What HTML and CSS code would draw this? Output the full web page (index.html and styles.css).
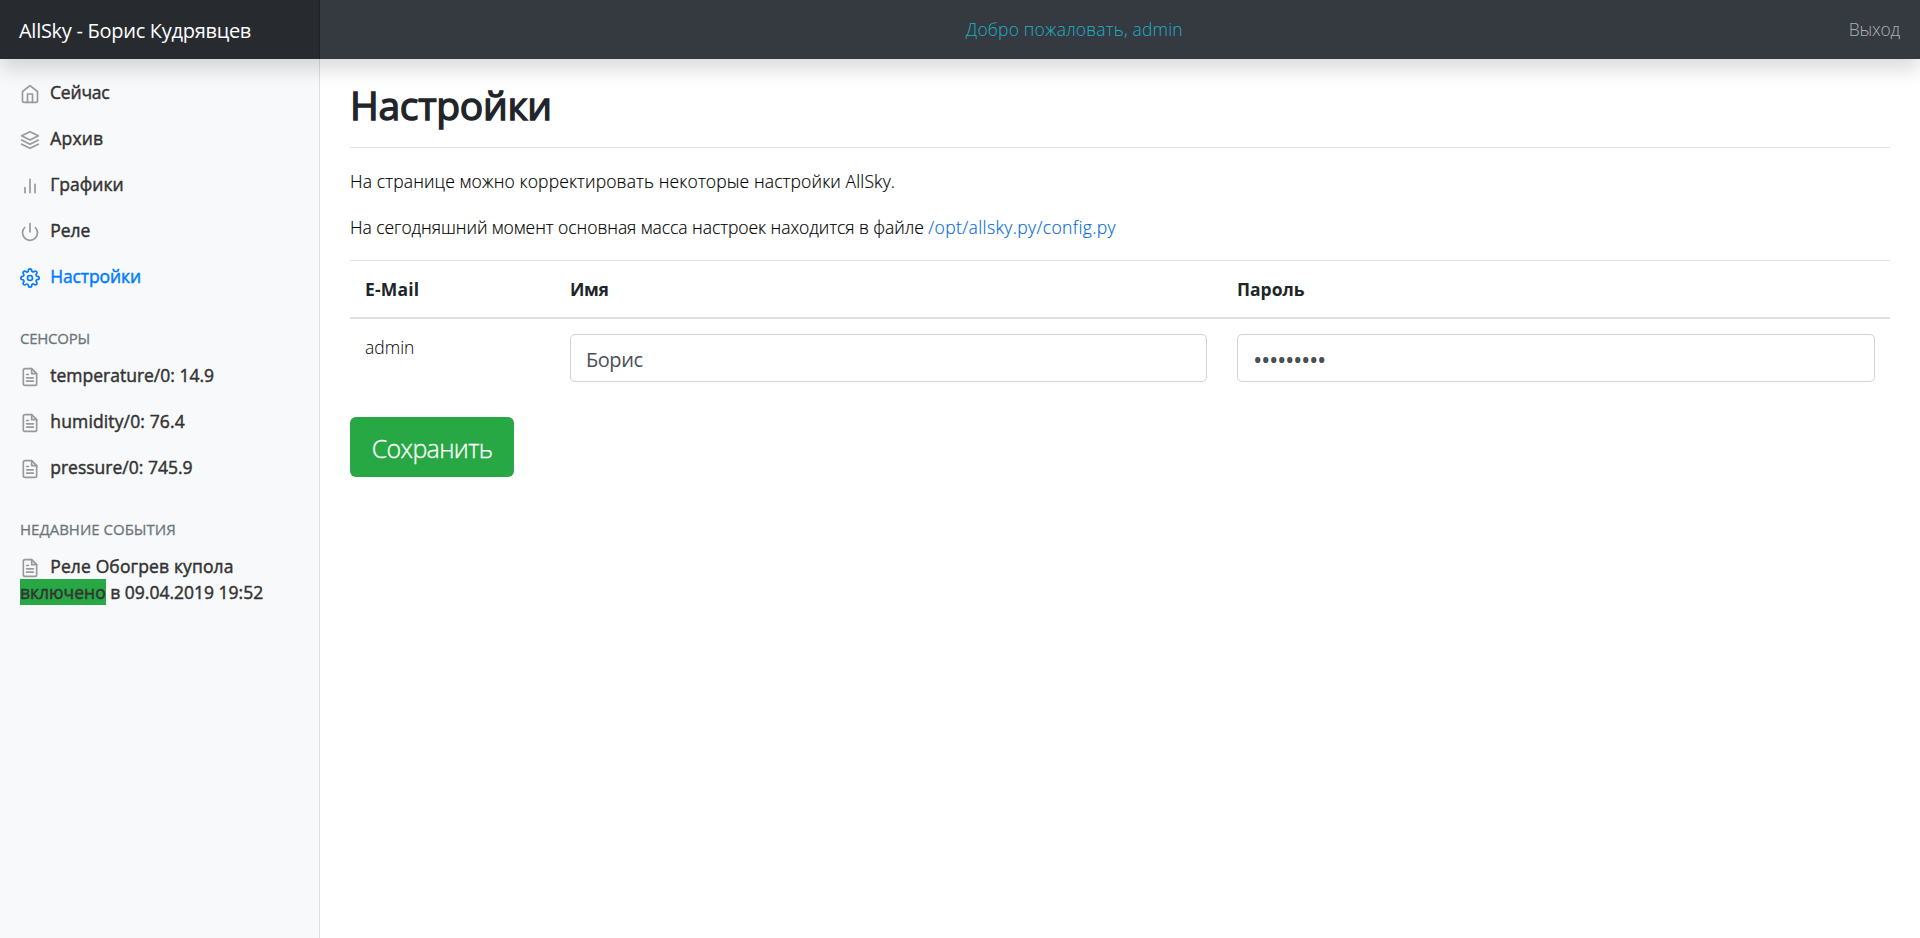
FILE: index.html
```
<!DOCTYPE html>
<html lang="ru">
<head>
<meta charset="utf-8">
<title>AllSky - Борис Кудрявцев</title>
<link rel="stylesheet" href="styles.css">
</head>
<body>
<svg class="sprite" aria-hidden="true">
  <symbol id="home" viewBox="0 0 24 24"><path d="M3 9l9-7 9 7v11a2 2 0 0 1-2 2H5a2 2 0 0 1-2-2z"/><polyline points="9 22 9 12 15 12 15 22"/></symbol>
  <symbol id="layers" viewBox="0 0 24 24"><polygon points="12 2 2 7 12 12 22 7 12 2"/><polyline points="2 17 12 22 22 17"/><polyline points="2 12 12 17 22 12"/></symbol>
  <symbol id="chart" viewBox="0 0 24 24"><line x1="18" y1="20" x2="18" y2="10"/><line x1="12" y1="20" x2="12" y2="4"/><line x1="6" y1="20" x2="6" y2="14"/></symbol>
  <symbol id="power" viewBox="0 0 24 24"><path d="M18.36 6.64a9 9 0 1 1-12.73 0"/><line x1="12" y1="2" x2="12" y2="12"/></symbol>
  <symbol id="settings" viewBox="0 0 24 24"><circle cx="12" cy="12" r="3"/><path d="M19.4 15a1.65 1.65 0 0 0 .33 1.82l.06.06a2 2 0 0 1 0 2.83 2 2 0 0 1-2.83 0l-.06-.06a1.65 1.65 0 0 0-1.82-.33 1.65 1.65 0 0 0-1 1.51V21a2 2 0 0 1-2 2 2 2 0 0 1-2-2v-.09A1.65 1.65 0 0 0 9 19.4a1.65 1.65 0 0 0-1.82.33l-.06.06a2 2 0 0 1-2.83 0 2 2 0 0 1 0-2.83l.06-.06a1.65 1.65 0 0 0 .33-1.82 1.65 1.65 0 0 0-1.51-1H3a2 2 0 0 1-2-2 2 2 0 0 1 2-2h.09A1.65 1.65 0 0 0 4.6 9a1.65 1.65 0 0 0-.33-1.82l-.06-.06a2 2 0 0 1 0-2.83 2 2 0 0 1 2.83 0l.06.06a1.65 1.65 0 0 0 1.82.33H9a1.65 1.65 0 0 0 1-1.51V3a2 2 0 0 1 2-2 2 2 0 0 1 2 2v.09a1.65 1.65 0 0 0 1 1.51 1.65 1.65 0 0 0 1.82-.33l.06-.06a2 2 0 0 1 2.83 0 2 2 0 0 1 0 2.83l-.06.06a1.65 1.65 0 0 0-.33 1.82V9a1.65 1.65 0 0 0 1.51 1H21a2 2 0 0 1 2 2 2 2 0 0 1-2 2h-.09a1.65 1.65 0 0 0-1.51 1z"/></symbol>
  <symbol id="file" viewBox="0 0 24 24"><path d="M14 2H6a2 2 0 0 0-2 2v16a2 2 0 0 0 2 2h12a2 2 0 0 0 2-2V8z"/><polyline points="14 2 14 8 20 8"/><line x1="16" y1="13" x2="8" y2="13"/><line x1="16" y1="17" x2="8" y2="17"/><polyline points="10 9 9 9 8 9"/></symbol>
</svg>
<header class="navbar">
  <a class="brand">AllSky - Борис Кудрявцев</a>
  <span class="welcome">Добро пожаловать, admin</span>
  <a class="logout">Выход</a>
</header>
<div class="layout">
  <nav class="sidebar">
    <ul class="nav">
      <li><a class="link tight"><svg class="icon"><use href="#home"/></svg> Сейчас</a></li>
      <li><a class="link loose"><svg class="icon"><use href="#layers"/></svg> Архив</a></li>
      <li><a class="link"><svg class="icon"><use href="#chart"/></svg> Графики</a></li>
      <li><a class="link"><svg class="icon"><use href="#power"/></svg> Реле</a></li>
      <li><a class="link active"><svg class="icon"><use href="#settings"/></svg> Настройки</a></li>
    </ul>
    <h6 class="section sensors">Сенсоры</h6>
    <ul class="nav">
      <li><a class="link"><svg class="icon"><use href="#file"/></svg> temperature/0: 14.9</a></li>
      <li><a class="link loose"><svg class="icon"><use href="#file"/></svg> humidity/0: 76.4</a></li>
      <li><a class="link"><svg class="icon"><use href="#file"/></svg> pressure/0: 745.9</a></li>
    </ul>
    <h6 class="section">Недавние события</h6>
    <ul class="nav">
      <li><a class="link"><svg class="icon"><use href="#file"/></svg> <span class="loose">Реле Обогрев купола</span> <span class="state-on">включено</span> в 09.04.2019 19:52</a></li>
    </ul>
  </nav>
  <main class="content">
    <h1 class="title">Настройки</h1>
    <p class="intro">На странице можно корректировать некоторые настройки AllSky.</p>
    <p class="where">На сегодняшний момент основная масса настроек находится в файле <a class="path">/opt/allsky.py/config.py</a></p>
    <form>
      <table class="users">
        <colgroup><col class="col-mail"><col class="col-name"><col class="col-pass"></colgroup>
        <thead><tr><th class="th-mail">E-Mail</th><th class="th-name">Имя</th><th class="th-pass">Пароль</th></tr></thead>
        <tbody><tr>
          <td class="mail">admin</td>
          <td><input class="field" type="text" value="Борис"></td>
          <td><input class="field secret" type="password" value="123456789"></td>
        </tr></tbody>
      </table>
      <button class="save" type="button">Сохранить</button>
    </form>
  </main>
</div>
</body>
</html>
```
FILE: styles.css
```
*, *::before, *::after { box-sizing: border-box; }

body {
  margin: 0;
  font: 400 17.5px/26px "Open Sans", "Noto Sans", sans-serif;
  color: #212529;
  background: #fff;
}

.sprite { display: none; }

.navbar {
  position: relative;
  z-index: 1;
  display: flex;
  align-items: center;
  justify-content: space-between;
  height: 59px;
  background: #343a40;
  box-shadow: 0 10px 20px rgba(0, 0, 0, .15);
}

.brand {
  width: 320px;
  height: 59px;
  padding: 1px 0 0 19px;
  line-height: 59px;
  font-size: 20px;
  letter-spacing: -.28px;
  color: #fff;
  background: rgba(0, 0, 0, .25);
  box-shadow: inset -1px 0 0 rgba(0, 0, 0, .25);
}

.welcome {
  margin-right: 20px;
  padding-bottom: 2px;
  font-weight: 300;
  letter-spacing: .17px;
  color: #20b0c6;
}

.logout {
  padding: 0 20px 2px 0;
  font-weight: 300;
  letter-spacing: -.16px;
  color: rgba(255, 255, 255, .6);
}

.layout { display: flex; min-height: 879px; }

.sidebar {
  flex: none;
  width: 320px;
  padding-top: 10px;
  background: #f8f9fa;
  box-shadow: inset -1px 0 0 rgba(0, 0, 0, .1);
}

.nav { margin: 0; padding: 0; list-style: none; }

.link {
  display: block;
  padding: 10px 20px;
  -webkit-text-stroke: .45px currentColor;
  color: #333;
}

.icon {
  width: 20px;
  height: 20px;
  margin-right: 5.7px;
  vertical-align: text-bottom;
  fill: none;
  stroke: #999;
  stroke-width: 2;
  stroke-linecap: round;
  stroke-linejoin: round;
}

.active { color: #007bff; letter-spacing: -.1px; }
.active .icon { stroke: currentColor; }
.tight { letter-spacing: -.2px; }
.loose { letter-spacing: .13px; }

.section {
  margin: 30px 20px 5px;
  font-size: 15px;
  line-height: 18px;
  font-weight: 400;
  -webkit-text-stroke: .3px currentColor;
  text-transform: uppercase;
  color: #6c757d;
}

.sensors { letter-spacing: -.25px; }

.state-on { padding: 1px 0; background: #28a745; }

.content { flex: 1; padding: 20px 30px 0; }

.title {
  margin: 0 0 20px;
  padding: 2px 0 18px;
  border-bottom: 1px solid #dee2e6;
  font-size: 39px;
  line-height: 48px;
  font-weight: 400;
  letter-spacing: -.3px;
  -webkit-text-stroke: 1.4px currentColor;
}

.intro, .where { margin: 0 0 20px; font-weight: 300; color: #000; -webkit-text-stroke: .15px currentColor; }
.intro { letter-spacing: .13px; }
.where { letter-spacing: -.05px; }

.path { letter-spacing: .38px; color: #0069e0; }

.users {
  width: 100%;
  margin-bottom: 20px;
  table-layout: fixed;
  border-collapse: separate;
  border-spacing: 0;
}

.col-mail { width: 205px; }
.col-name { width: 667px; }

.users th {
  padding: 15px;
  text-align: left;
  font-weight: 700;
  border-top: 1px solid #dee2e6;
  border-bottom: 2px solid #dee2e6;
}

.users td { padding: 15px; vertical-align: top; }

.users .th-mail { letter-spacing: .2px; }
.users .th-name { letter-spacing: -.4px; }
.mail { font-weight: 300; color: #000; }

.field {
  display: block;
  width: 100%;
  height: 48px;
  padding: 3px 15px 0;
  border: 1px solid #ced4da;
  border-radius: 5px;
  font: 400 20px "Open Sans", "Noto Sans", sans-serif;
  letter-spacing: -.45px;
  color: #495057;
  background: #fff;
}

.secret { font-size: 25px; letter-spacing: -1.4px; padding-top: 1px; }

.save {
  display: block;
  width: 164px;
  height: 60px;
  padding: 2px 0 0;
  border: 0;
  border-radius: 6px;
  font: 300 25px "Open Sans", "Noto Sans", sans-serif;
  letter-spacing: -.65px;
  -webkit-text-stroke: .3px currentColor;
  color: #fff;
  background: #28a745;
}
```
